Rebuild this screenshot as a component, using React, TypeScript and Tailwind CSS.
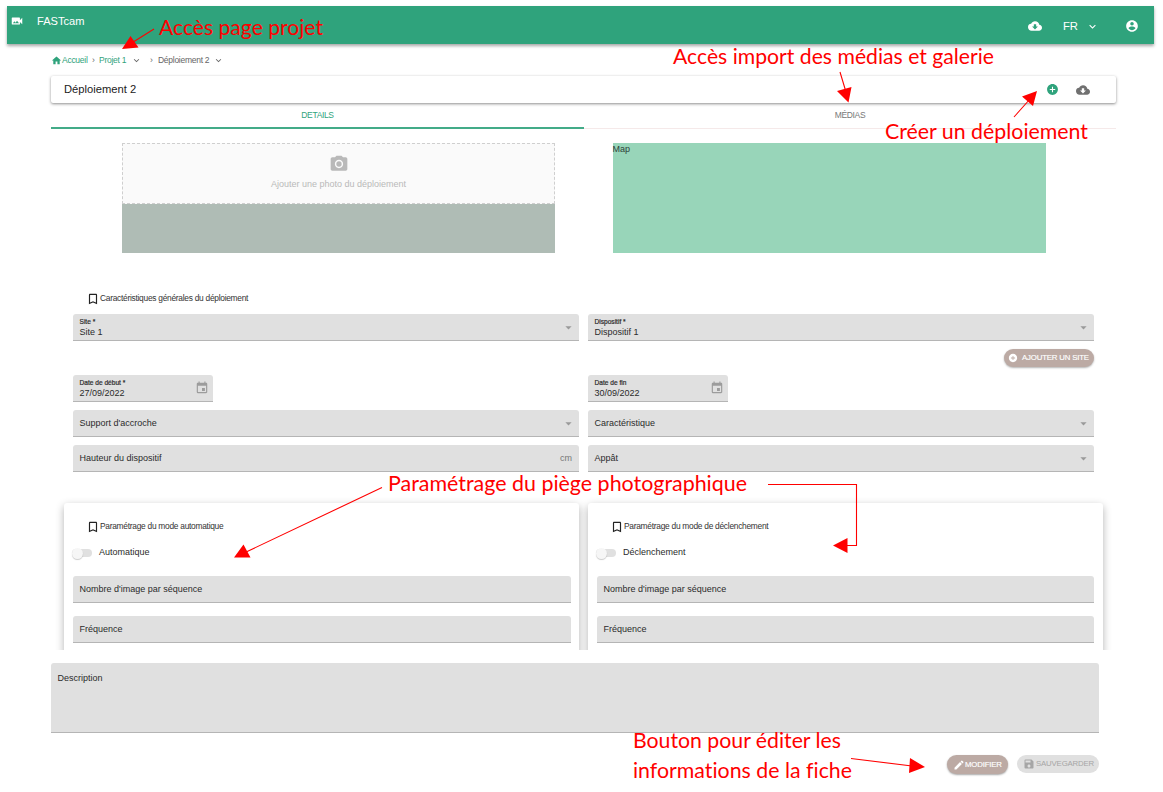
import React from "react";
import {
  MdAddCircle,
  MdArrowDropDown,
  MdBookmarkBorder,
  MdCloudDownload,
  MdEdit,
  MdEvent,
  MdExpandMore,
  MdHome,
  MdSave,
} from "react-icons/md";

function CameraLogo() {
  return (
    <svg viewBox="0 0 24 24" className="size-[14px] shrink-0" fill="currentColor">
      <path d="M17 10.5V7a1 1 0 0 0-1-1H4a1 1 0 0 0-1 1v10a1 1 0 0 0 1 1h12a1 1 0 0 0 1-1v-3.500l4 4v-11l-4 4M5 16l2.500-3.500 2 2.400 2.500-3.400L15.500 16H5" />
    </svg>
  );
}

function AccountIcon({ className }: { className: string }) {
  return (
    <svg viewBox="0 0 24 24" className={className} fill="currentColor">
      <path d="M12 2C6.48 2 2 6.48 2 12s4.48 10 10 10 10-4.48 10-10S17.52 2 12 2zm0 3c1.66 0 3 1.34 3 3s-1.34 3-3 3-3-1.340-3-3 1.340-3 3-3zm0 14.200c-2.500 0-4.710-1.280-6-3.220.030-1.990 4-3.080 6-3.080 1.990 0 5.970 1.090 6 3.080-1.290 1.940-3.500 3.220-6 3.220z" />
    </svg>
  );
}

function PhotoIcon({ className }: { className: string }) {
  return (
    <svg viewBox="0 0 24 24" className={className} fill="currentColor">
      <circle cx="12" cy="12" r="3.200" />
      <path d="M9 2L7.170 4H4c-1.100 0-2 .9-2 2v12c0 1.100.9 2 2 2h16c1.100 0 2-.9 2-2V6c0-1.100-.9-2-2-2h-3.170L15 2H9zm3 15c-2.760 0-5-2.240-5-5s2.240-5 5-5 5 2.240 5 5-2.240 5-5 5z" />
    </svg>
  );
}

function Header() {
  return (
    <header className="flex h-[38px] bg-[#2fa37c] text-white shadow-[0_2px_3px_rgba(0,0,0,0.35)]">
      <div className="flex h-[30px] items-center pl-[3px]">
        <CameraLogo />
        <span className="pl-[13px] text-[11.1px]">FASTcam</span>
      </div>
      <div className="ml-auto flex h-[40px] items-center pr-[15px]">
        <MdCloudDownload className="size-[14px]" />
        <span className="ml-[21px] text-[11.3px]">FR</span>
        <MdExpandMore className="ml-[8px] size-[13px]" />
        <AccountIcon className="ml-[26px] size-[14px]" />
      </div>
    </header>
  );
}

function Breadcrumb() {
  return (
    <nav className="flex h-[32px] items-center pl-[44px] text-[8.5px] tracking-[-0.27px] text-[#666]">
      <MdHome className="size-[11px] text-[#2fa37c]" />
      <span className="w-[26px] text-[#2fa37c]">Accueil</span>
      <span className="ml-[4px] w-[7px]">›</span>
      <span className="w-[28px] text-[#2fa37c]">Projet 1</span>
      <MdExpandMore className="ml-[4px] size-[11px]" />
      <span className="ml-[8px] w-[8px]">›</span>
      <span className="w-[52px]">Déploiement 2</span>
      <MdExpandMore className="ml-[3px] size-[11px]" />
    </nav>
  );
}

function TitleBar() {
  return (
    <div className="flex h-[27px] items-center rounded-[2px] bg-white pl-[13px] pr-[26px] shadow-[0_1px_3px_rgba(0,0,0,0.45)]">
      <h1 className="text-[11.2px] text-[#222]">Déploiement 2</h1>
      <MdAddCircle className="ml-auto size-[13px] text-[#2fa37c]" />
      <MdCloudDownload className="ml-[17px] size-[14px] text-[#707070]" />
    </div>
  );
}

function Tabs() {
  return (
    <div className="flex h-[26px] text-[8.5px] leading-[24px] tracking-[-0.35px]">
      <div className="w-[533px] border-b-2 border-[#43ab88] text-center text-[#2fa37c]">DETAILS</div>
      <div className="flex-1 border-b border-[#f5e9e9] text-center text-[#777]">MÉDIAS</div>
    </div>
  );
}

function Media() {
  return (
    <div className="flex h-[110px] gap-[57.5px] pl-[71px]">
      <div className="w-[433px] bg-[#afbcb5]">
        <div className="flex h-[61px] flex-col items-center border border-dashed border-[#cfcfcf] bg-[#fafafa] pt-[10px] text-[#b9b9b9]">
          <PhotoIcon className="size-[20px]" />
          <span className="mt-[4px] text-[9px] leading-[12px]">Ajouter une photo du déploiement</span>
        </div>
      </div>
      <div className="w-[433px] bg-[#98d5b9] text-[9px] leading-[13px] text-[#2e4239]">Map</div>
    </div>
  );
}

function SectionTitle({ children }: { children: React.ReactNode }) {
  return (
    <div className="flex h-[14px] items-center pl-[13px] text-[8.4px] tracking-[-0.27px] text-[#333]">
      <MdBookmarkBorder className="mt-px size-[14px] text-[#222]" />
      <span>{children}</span>
    </div>
  );
}

interface FieldProps {
  label: string;
  value?: string;
  select?: boolean;
  date?: boolean;
  suffix?: string;
}

function Field({ label, value, select, date, suffix }: FieldProps) {
  return (
    <div
      className={
        "flex h-[27px] items-center rounded-t-[3px] border-b border-[#b5b5b5] bg-[#e0e0e0] pl-[6.5px] text-[9px] text-[#2b2b2b] " +
        (date ? "w-[140px] pr-[4px]" : "w-full pr-[3px]")
      }
    >
      {value ? (
        <div className="flex flex-col pt-px">
          <span className="text-[6.6px] leading-[9px] [-webkit-text-stroke:0.2px_#2b2b2b]">{label}</span>
          <span className="text-[9px] leading-[12px]">{value}</span>
        </div>
      ) : (
        <span className="pt-[2px]">{label}</span>
      )}
      {select && <MdArrowDropDown className="ml-auto size-[15px] text-[#9a9a9a]" />}
      {date && <MdEvent className="ml-auto size-[14px] text-[#9c9c9c]" />}
      {suffix && <span className="ml-auto pr-[4px] pt-px text-[#777]">{suffix}</span>}
    </div>
  );
}

function Row({ children }: { children: React.ReactNode }) {
  return <div className="grid grid-cols-[506px_506px] gap-[9px]">{children}</div>;
}

function ModeCard({ title, toggle, className }: { title: string; toggle: string; className: string }) {
  return (
    <div className={"h-[170px] w-[515px] rounded-[3px] bg-white pt-[16px] shadow-[0_3px_8px_rgba(0,0,0,0.3)] " + className}>
      <SectionTitle>{title}</SectionTitle>
      <div className="mt-[12px] flex h-[16px] items-center text-[9px] text-[#2b2b2b]">
        <div className="-ml-px flex h-[8px] w-[20px] items-center rounded-full bg-[#e0e0e0]">
          <div className="size-[11px] shrink-0 rounded-full bg-[#f6f6f6] shadow-[0_1px_1px_rgba(0,0,0,0.2)]" />
        </div>
        <span className="ml-[7px]">{toggle}</span>
      </div>
      <div className="mt-[15px] flex flex-col gap-[13px]">
        <Field label="Nombre d'image par séquence" />
        <Field label="Fréquence" />
      </div>
    </div>
  );
}

function Annotations() {
  return (
    <svg className="pointer-events-none absolute inset-0" width="1163" height="792" fill="#f00">
      <g stroke="#f00" strokeWidth="1.1" fill="none">
        <path d="M154 29L130 44M840 72L846 92M1014 117L1030 99M382 487.500L244 553M851 758.500L912 766" />
        <path d="M768 484.500H856.500V545.500H845" />
      </g>
      <path d="M122 49L130.500 36L138.500 47.500ZM848.500 102.500L837 91L851.500 87ZM1037 91L1022 96.500L1033 106ZM234 557.500L243.500 544.500L250.500 557.500ZM833 545.500L847.500 538V553ZM925 767L910 758L909 773Z" />
      <g className="font-['Lato',sans-serif] text-[20.5px] [font-variant-ligatures:none]">
        <text x="159" y="35" textLength="164" lengthAdjust="spacingAndGlyphs">Accès page projet</text>
        <text x="673" y="64" textLength="321" lengthAdjust="spacingAndGlyphs">Accès import des médias et galerie</text>
        <text x="885" y="139" textLength="203" lengthAdjust="spacingAndGlyphs">Créer un déploiement</text>
        <text x="388" y="491" textLength="359" lengthAdjust="spacingAndGlyphs">Paramétrage du piège photographique</text>
        <text x="633" y="748" textLength="208" lengthAdjust="spacingAndGlyphs">Bouton pour éditer les</text>
        <text x="633" y="778" textLength="219" lengthAdjust="spacingAndGlyphs">informations de la fiche</text>
      </g>
    </svg>
  );
}

export default function App() {
  return (
    <div className="relative h-[792px] w-[1163px] overflow-hidden bg-white pl-[7px] pr-[9px] pt-[6px] font-['Liberation_Sans',Arial,sans-serif]">
      <Header />
      <Breadcrumb />
      <div className="ml-[44px] w-[1065px]">
        <TitleBar />
        <Tabs />
        <div className="mt-[14px]">
          <Media />
        </div>
      </div>

      <div className="ml-[66px] mt-[38px]">
        <SectionTitle>Caractéristiques générales du déploiement</SectionTitle>
        <div className="mt-[9px]">
          <Row>
            <Field label="Site *" value="Site 1" select />
            <Field label="Dispositif *" value="Dispositif 1" select />
          </Row>
        </div>
        <div className="flex h-[34px] w-[1021px] justify-end pt-[8px]">
          <button className="flex h-[18px] w-[90px] items-center rounded-full bg-[#bcaaa4] pl-[4px] text-[7.8px] tracking-[-0.16px] text-white shadow-[0_1px_2px_rgba(0,0,0,0.3)] [-webkit-text-stroke:0.15px_#fff]">
            <MdAddCircle className="size-[10px]" />
            <span className="ml-[4px] whitespace-nowrap">AJOUTER UN SITE</span>
          </button>
        </div>
        <div className="flex flex-col gap-[8px]">
          <Row>
            <Field label="Date de début *" value="27/09/2022" date />
            <Field label="Date de fin" value="30/09/2022" date />
          </Row>
          <Row>
            <Field label="Support d'accroche" select />
            <Field label="Caractéristique" select />
          </Row>
          <Row>
            <Field label="Hauteur du dispositif" suffix="cm" />
            <Field label="Appât" select />
          </Row>
        </div>
      </div>

      <div className="ml-[37px] flex h-[178px] gap-[9px] overflow-hidden pl-[20px] pt-[31px]">
        <ModeCard title="Paramétrage du mode automatique" toggle="Automatique" className="pl-[9px] pr-[8px]" />
        <ModeCard title="Paramétrage du mode de déclenchement" toggle="Déclenchement" className="pl-[9px] pr-[9px]" />
      </div>

      <div className="ml-[44px] mt-[13px] h-[70px] w-[1048px] rounded-t-[3px] border-b border-[#b5b5b5] bg-[#e0e0e0] pl-[6.5px] pt-[9px] text-[9px] leading-[13px] text-[#2b2b2b]">
        Description
      </div>
      <div className="mt-[22px] flex w-[1092px] justify-end gap-[9px] text-[7.8px] tracking-[-0.16px]">
        <button className="flex h-[19px] w-[61px] items-center rounded-full bg-[#bcaaa4] pl-[6px] text-white shadow-[0_1px_2px_rgba(0,0,0,0.35)] [-webkit-text-stroke:0.15px_#fff]">
          <MdEdit className="size-[12px] shrink-0" />
          <span>MODIFIER</span>
        </button>
        <button className="flex h-[18px] w-[82px] items-center rounded-full bg-[#e0e0e0] pl-[6px] text-[#a6a6a6]">
          <MdSave className="size-[12px] shrink-0" />
          <span className="pl-px">SAUVEGARDER</span>
        </button>
      </div>
      <Annotations />
    </div>
  );
}
